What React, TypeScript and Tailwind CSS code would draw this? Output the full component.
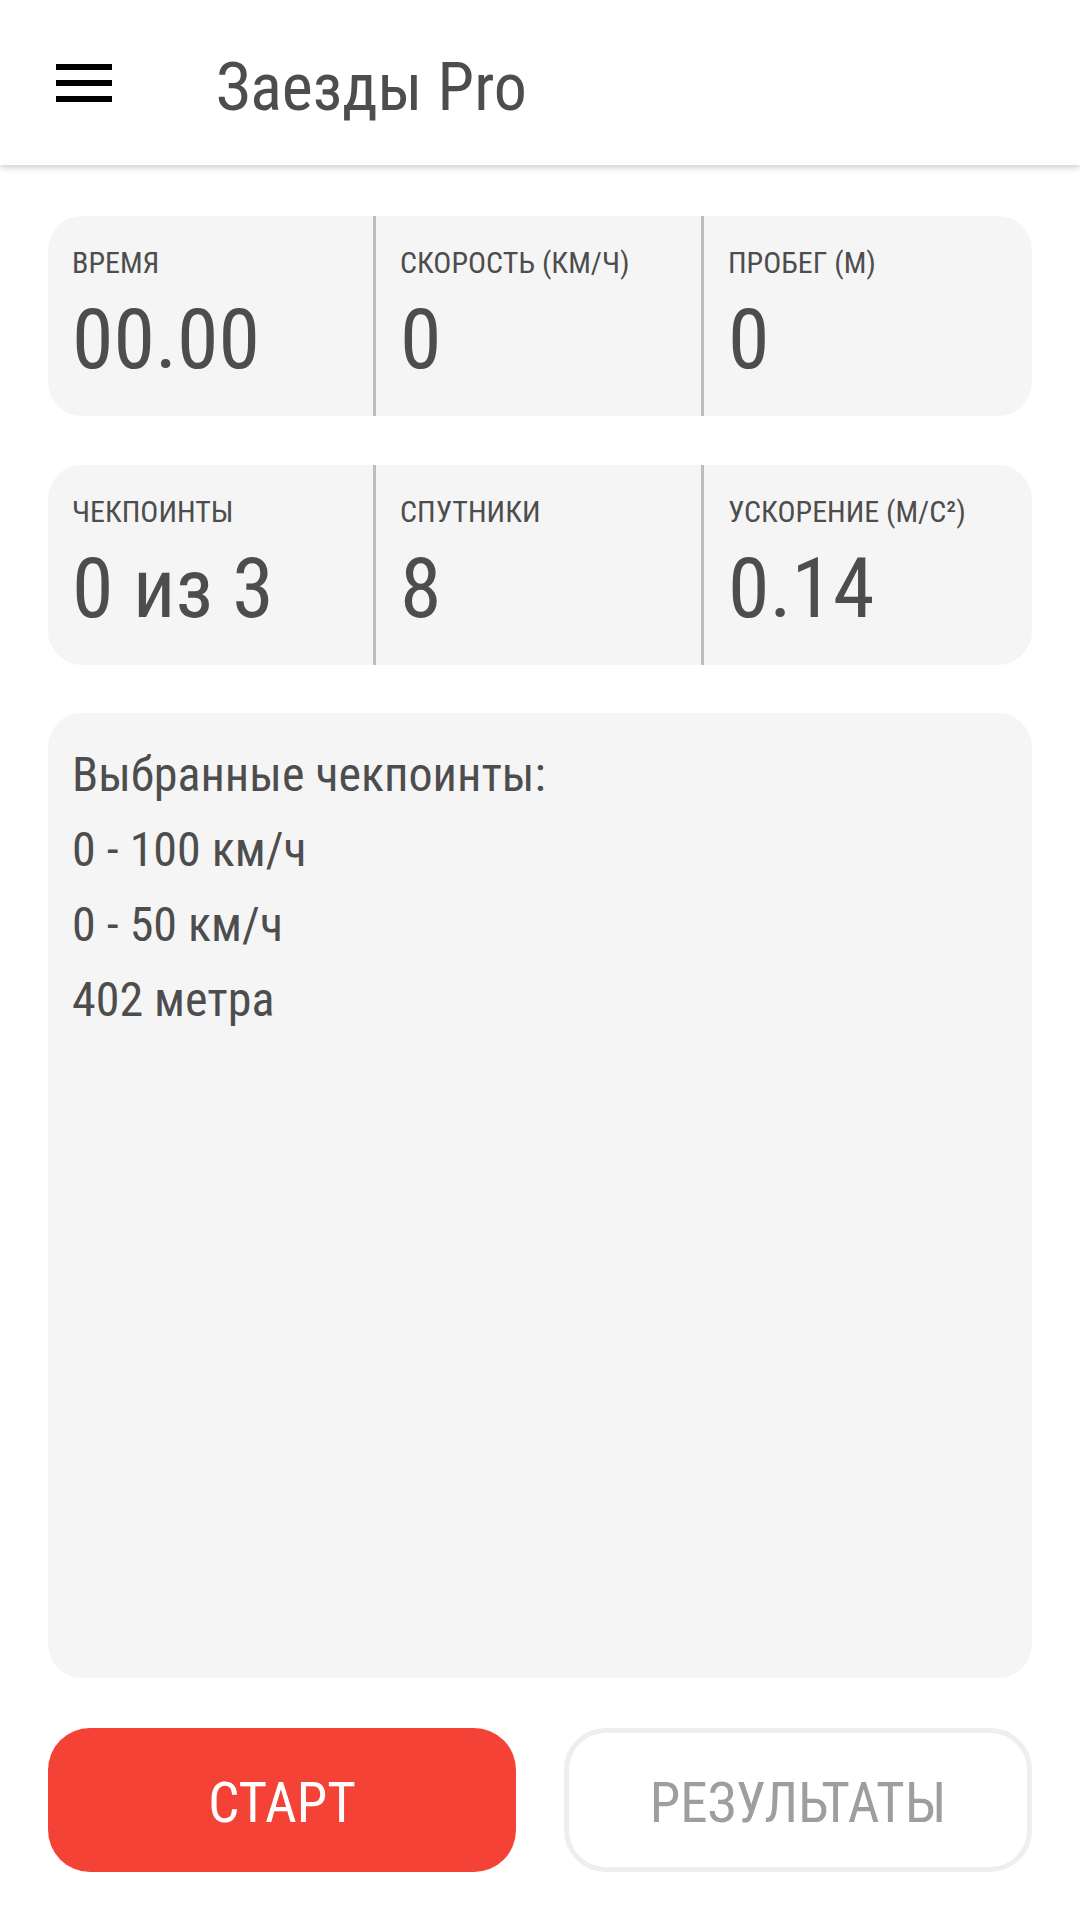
import React from "react";

const font = "font-['Roboto_Condensed','Roboto','Liberation_Sans_Narrow',sans-serif] [font-stretch:75%]";

function Stat({ label, value, border }: { label: string; value: string; border: boolean }) {
  return (
    <div className={`flex flex-col pl-[24px] pt-[30px] ${border ? "border-r-[3px] border-[#bdbdbd]" : ""}`}>
      <div className="text-[30px] leading-[34px] text-[#4d4d4d] whitespace-nowrap">{label}</div>
      <div className="mt-[10px] text-[84px] leading-[100px] text-[#4d4d4d] whitespace-nowrap">{value}</div>
    </div>
  );
}

function StatCard({ items, className = "" }: { items: [string, string][]; className?: string }) {
  return (
    <div className={`grid grid-cols-3 h-[200px] shrink-0 rounded-[34px] bg-[#f5f5f5] overflow-hidden ${className}`}>
      {items.map(([l, v], i) => (
        <Stat key={l} label={l} value={v} border={i < 2} />
      ))}
    </div>
  );
}

export default function App() {
  return (
    <div className={`w-[1080px] h-[1920px] bg-white flex flex-col ${font}`}>
      <header className="relative z-10 h-[165px] shrink-0 flex items-center bg-white shadow-[0_3px_6px_rgba(0,0,0,0.18)]">
        <svg className="ml-[56px]" width="56" height="38" viewBox="0 0 56 38">
          <rect x="0" y="0" width="56" height="6" fill="#000" />
          <rect x="0" y="16" width="56" height="6" fill="#000" />
          <rect x="0" y="32" width="56" height="6" fill="#000" />
        </svg>
        <div className="ml-[104px] pt-[10px] text-[66px] leading-[80px] text-[#4d4d4d]">Заезды Pro</div>
      </header>
      <main className="flex-1 flex flex-col px-[48px] pt-[51px] pb-[48px]">
        <StatCard
          items={[
            ["ВРЕМЯ", "00.00"],
            ["СКОРОСТЬ (КМ/Ч)", "0"],
            ["ПРОБЕГ (М)", "0"],
          ]}
        />
        <StatCard
          className="mt-[49px]"
          items={[
            ["ЧЕКПОИНТЫ", "0 из 3"],
            ["СПУТНИКИ", "8"],
            ["УСКОРЕНИЕ (М/С²)", "0.14"],
          ]}
        />
        <div className="mt-[48px] flex-1 rounded-[34px] bg-[#f5f5f5] px-[24px] pt-[24px] text-[48px] leading-[75px] text-[#4d4d4d]">
          <div>Выбранные чекпоинты:</div>
          <div>0 - 100 км/ч</div>
          <div>0 - 50 км/ч</div>
          <div>402 метра</div>
        </div>
        <div className="mt-[50px] grid grid-cols-2 gap-[48px] h-[144px] shrink-0">
          <button className={`rounded-[42px] bg-[#f44336] text-white text-[55px] leading-[64px] pt-[6px] ${font}`}>
            СТАРТ
          </button>
          <button className={`rounded-[42px] bg-white border-[5px] border-[#eeeeee] text-[#9e9e9e] text-[55px] leading-[64px] pt-[6px] ${font}`}>
            РЕЗУЛЬТАТЫ
          </button>
        </div>
      </main>
    </div>
  );
}
